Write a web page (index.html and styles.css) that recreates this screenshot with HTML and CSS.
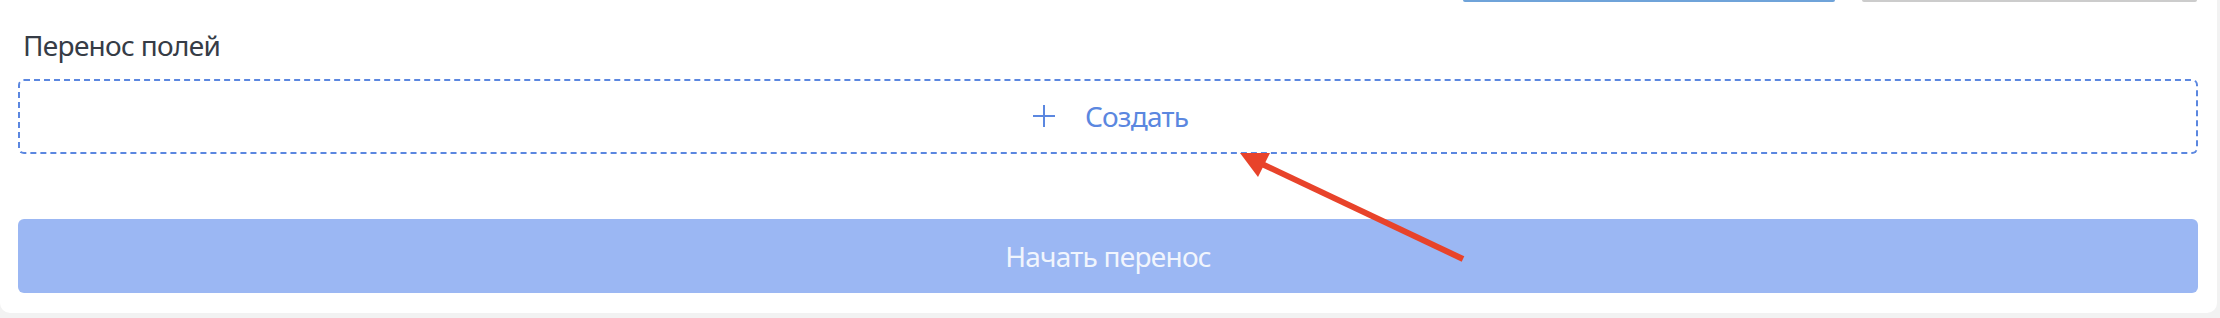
FILE: index.html
```html
<!DOCTYPE html>
<html lang="ru">
<head>
<meta charset="utf-8">
<link rel="stylesheet" href="styles.css">
</head>
<body>
<div class="card">
  <div class="top-actions">
    <div class="btn-top btn-top-blue"></div>
    <div class="btn-top btn-top-gray"></div>
  </div>
  <div class="label">Перенос полей</div>
  <div class="create-box">
    <svg class="plus" width="24" height="24" viewBox="0 0 24 24"><path d="M12 1V23M1 12H23" stroke="#5b87e0" stroke-width="2" fill="none"/></svg>
    <span class="create-text">Создать</span>
  </div>
  <div class="start-btn">Начать перенос</div>
  <svg class="arrow" width="2220" height="318" viewBox="0 0 2220 318">
    <line x1="1463" y1="259" x2="1262" y2="164" stroke="#e8432a" stroke-width="6"/>
    <polygon points="1240,153 1270,153 1258,177" fill="#e8432a"/>
  </svg>
</div>
</body>
</html>
```
FILE: styles.css
```css
html, body {
  margin: 0;
  padding: 0;
  background: #f2f2f2;
}
body {
  width: 2220px;
  height: 318px;
  overflow: hidden;
  font-family: "Noto Sans", "Open Sans", sans-serif;
}
.card {
  position: relative;
  width: 2217px;
  height: 313px;
  box-sizing: border-box;
  background: #ffffff;
  border-radius: 0 0 10px 10px;
  padding: 0 19px 20px 18px;
  display: flex;
  flex-direction: column;
}
.top-actions {
  display: flex;
  justify-content: flex-end;
  gap: 27px;
  height: 2px;
  padding-right: 1px;
}
.btn-top {
  height: 2px;
  border-radius: 0 0 3px 3px;
}
.btn-top-blue {
  width: 372px;
  background: #6fa3d9;
}
.btn-top-gray {
  width: 335px;
  background: #cccccc;
}
.label {
  margin-top: 24px;
  margin-left: 5px;
  font-size: 28px;
  line-height: 38px;
  letter-spacing: -0.7px;
  color: #363c46;
}
.create-box {
  margin-top: 15px;
  height: 75px;
  box-sizing: border-box;
  border: 2px dashed #5b87e0;
  border-radius: 6px;
  display: flex;
  align-items: center;
  justify-content: center;
  gap: 29px;
  padding-left: 4px;
}
.plus {
  display: block;
}
.create-text {
  font-size: 28px;
  line-height: 38px;
  letter-spacing: -0.8px;
  color: #5b87e0;
}
.start-btn {
  margin-top: 65px;
  height: 75px;
  border-radius: 6px;
  background: #9bb7f3;
  color: #f1f5fd;
  font-size: 28px;
  letter-spacing: -0.75px;
  display: flex;
  align-items: center;
  justify-content: center;
}
.arrow {
  position: absolute;
  left: 0;
  top: 0;
  pointer-events: none;
}
```
